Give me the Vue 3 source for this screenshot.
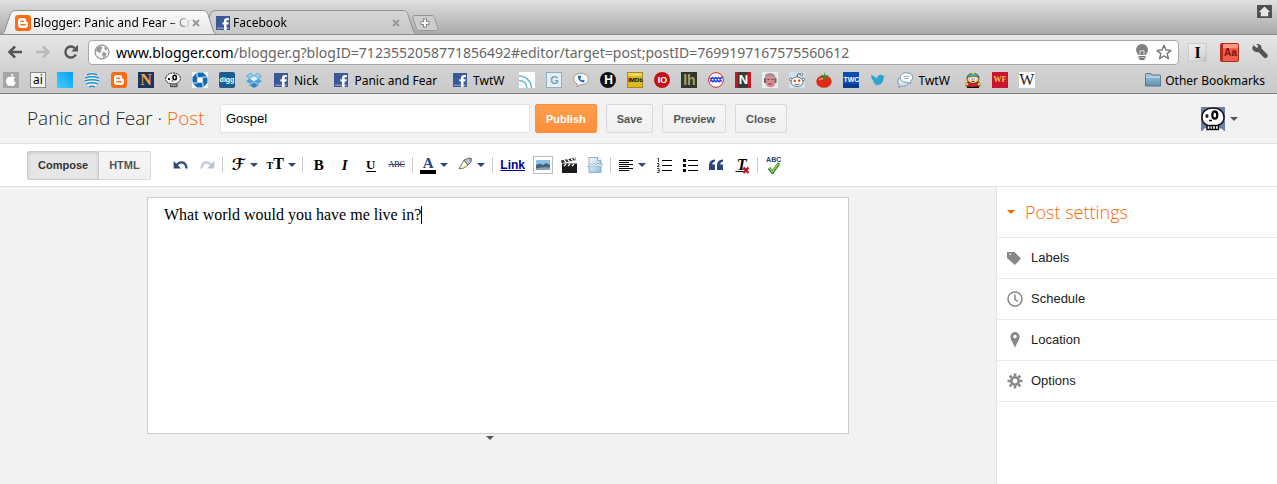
<script setup>
import { ref } from 'vue'

const tabs = [
    { title: 'Blogger: Panic and Fear – Cre', icon: 'blogger', active: true },
    { title: 'Facebook', icon: 'facebook', active: false }
]

// entries with "letters" have a text favicon, styled by class
const bookmarks = [
    { icon: 'apple', name: 'Apple' },
    { icon: 'ai', name: 'ai', letters: 'ai' },
    { icon: 'blue', name: 'Blue' },
    { icon: 'att', name: 'AT&T' },
    { icon: 'blogger', name: 'Blogger' },
    { icon: 'north', name: 'North', letters: 'N' },
    { icon: 'skull', name: 'Skull' },
    { icon: 'chase', name: 'Chase' },
    { icon: 'digg', name: 'Digg', letters: 'digg' },
    { icon: 'dropbox', name: 'Dropbox' },
    { icon: 'facebook', name: 'Nick', label: 'Nick' },
    { icon: 'facebook', name: 'Panic and Fear', label: 'Panic and Fear' },
    { icon: 'facebook', name: 'TwtW', label: 'TwtW' },
    { icon: 'feed', name: 'Feed' },
    { icon: 'gee', name: 'G', letters: 'G' },
    { icon: 'voice', name: 'Voice' },
    { icon: 'aitch', name: 'H', letters: 'H' },
    { icon: 'imdb', name: 'IMDb', letters: 'IMDb' },
    { icon: 'io', name: 'IO', letters: 'IO' },
    { icon: 'lh', name: 'Lifehacker', letters: 'lh' },
    { icon: 'wave', name: 'Wave' },
    { icon: 'netflix', name: 'Netflix', letters: 'N' },
    { icon: 'face', name: 'Face' },
    { icon: 'reddit', name: 'Reddit' },
    { icon: 'tomato', name: 'Tomatoes' },
    { icon: 'twc', name: 'TWC', letters: 'TWC' },
    { icon: 'bird', name: 'Twitter' },
    { icon: 'chat', name: 'TwtW chat', label: 'TwtW' },
    { icon: 'cartman', name: 'South Park' },
    { icon: 'wf', name: 'WF', letters: 'WF' },
    { icon: 'wiki', name: 'Wikipedia', letters: 'W' }
]

const toolGroups = [
    [{ icon: 'undo' }, { icon: 'redo' }],
    [{ icon: 'font', text: 'ℱ', menu: true }, { icon: 'size', text: 'T', menu: true }],
    [{ icon: 'bold', text: 'B' }, { icon: 'italic', text: 'I' }, { icon: 'underline', text: 'U' }, { icon: 'strike', text: 'ABC' }],
    [{ icon: 'color', text: 'A', menu: true }, { icon: 'highlight', menu: true }],
    [{ icon: 'link', text: 'Link' }, { icon: 'image' }, { icon: 'video' }, { icon: 'break' }],
    [{ icon: 'align', menu: true }, { icon: 'numbers' }, { icon: 'bullets' }, { icon: 'quote' }, { icon: 'clear', text: 'T', mark: 'cross' }],
    [{ icon: 'spell', text: 'ABC', mark: 'check' }]
]

const settings = [
    { icon: 'tag', label: 'Labels' },
    { icon: 'clock', label: 'Schedule' },
    { icon: 'pin', label: 'Location' },
    { icon: 'gear', label: 'Options' }
]

const title = ref('Gospel')
const body = ref('What world would you have me live in?')
const mode = ref('Compose')
</script>

<template>
    <div class="page">
        <svg class="sprite" aria-hidden="true">
            <defs>
                <linearGradient id="g-active" x1="0" y1="0" x2="0" y2="1">
                    <stop offset="0" stop-color="#fafafa" />
                    <stop offset="1" stop-color="#e6e6e6" />
                </linearGradient>
                <linearGradient id="g-idle" x1="0" y1="0" x2="0" y2="1">
                    <stop offset="0" stop-color="#d6d6d6" />
                    <stop offset="1" stop-color="#c6c6c6" />
                </linearGradient>
                <linearGradient id="g-blue" x1="0" y1="1" x2="1" y2="0">
                    <stop offset="0" stop-color="#3fd0ff" />
                    <stop offset="1" stop-color="#0a9cf5" />
                </linearGradient>
                <linearGradient id="g-folder" x1="0" y1="0" x2="0" y2="1">
                    <stop offset="0" stop-color="#a9c9de" />
                    <stop offset="1" stop-color="#5f8fb3" />
                </linearGradient>
                <linearGradient id="g-page" x1="0" y1="0" x2="1" y2="1">
                    <stop offset="0" stop-color="#fff" />
                    <stop offset="1" stop-color="#86b8e6" />
                </linearGradient>
            </defs>

            <symbol id="i-blogger" viewBox="0 0 16 16">
                <rect width="16" height="16" rx="3" fill="#ff6a13" />
                <path d="M6 3h2.500a2.700 2.700 0 0 1 2.700 2.700c0 .9.300 1.200 1 1.200.500 0 .8.300.8.800v2.300a3 3 0 0 1-3 3H6a3 3 0 0 1-3-3V6a3 3 0 0 1 3-3z" fill="#fff" />
                <path d="M6 6.200h2.300M6 9.800h4" stroke="#ff6a13" stroke-width="1.500" stroke-linecap="round" />
            </symbol>
            <symbol id="i-facebook" viewBox="0 0 16 16">
                <rect x="1" y="1" width="14" height="14" fill="#3b5998" />
                <path d="M2 12.500h12V14H2z" fill="#7e93c0" />
                <path d="M9 15V9.500H7.400V7.300H9V5.800C9 3.800 10.200 3 12 3h1.800v2.200h-1.200c-.7 0-1 .300-1 1v1.100h2.100l-.3 2.200h-1.800V15z" fill="#fff" />
            </symbol>
            <symbol id="i-apple" viewBox="0 0 16 16">
                <rect width="16" height="16" fill="#a6a6a6" />
                <path d="M8 5c1-.6 3-1 4.200.6-1.900 1.300-1.600 3.900.5 4.800C12 12.500 11 14 9.800 14c-.7 0-1-.4-1.800-.4s-1.200.4-1.900.4C4.300 13.800 3 11 3 8.600 3 5.500 6 4 8 5zM7.900 4.300C7.800 2.900 9 1.800 10.300 1.700 10.400 3.100 9.200 4.300 7.900 4.300z" fill="#fff" />
            </symbol>
            <symbol id="i-blue" viewBox="0 0 16 16">
                <rect width="16" height="16" fill="url(#g-blue)" />
            </symbol>
            <symbol id="i-att" viewBox="0 0 16 16">
                <circle cx="8" cy="8" r="7.500" fill="#e8f1f5" />
                <path d="M3 3q5-2.500 10 0M1 6q7-2.500 14 0M.7 9q7-2.500 14.600 0M2 12q6-2.500 12 0M5 14.700q3-1 6 0" fill="none" stroke="#2a8dbc" stroke-width="1.500" />
            </symbol>
            <symbol id="i-skull" viewBox="0 0 16 16">
                <path d="M8 1c4.500 0 7.300 2.300 7.300 5.500 0 2.500-1.500 3.700-3.300 4.700v3.500H5.500v-3.200C2.500 11 .7 9.500.7 6.800.7 3.400 3.800 1 8 1z" fill="#fff" stroke="#222" stroke-dasharray="2 .6" />
                <ellipse cx="9.700" cy="5.500" rx="1.700" ry="2.200" fill="none" stroke="#000" stroke-width="1.600" />
                <path d="M3 6h2v2H3z" fill="#111" />
                <path d="M6.500 9h2M7 12v3M9 12v3M11 12v3M5.500 11.800h6.500" fill="none" stroke="#222" stroke-width=".9" />
            </symbol>
            <symbol id="i-chase" viewBox="0 0 16 16">
                <rect width="16" height="16" fill="#fff" />
                <path d="M5 .5h6L15.500 5v6L11 15.500H5L.5 11V5z" fill="#0d6cb5" />
                <path d="M5.200 5.200h5.600v5.600H5.200z" fill="#fff" />
                <path d="M5 0v5M16 5h-5M11 16v-5M0 11h5" stroke="#fff" stroke-width=".9" />
            </symbol>
            <symbol id="i-dropbox" viewBox="0 0 16 16">
                <path d="M4.500.8 8 3.500l3.500-2.700L16 4l-3.200 2.700L16 9.200l-4.500 2.800L8 9.500 4.500 12 0 9.200l3.200-2.500L0 4z" fill="#4aa3df" />
                <path d="m8 4 4.300 2.700L8 9.300 3.700 6.700z" fill="#e4f3fc" />
                <path d="m3.200 12 1.300.9L8 10.400l3.500 2.500 1.300-.9v1L8 16l-4.800-3z" fill="#2f86c6" />
                <path d="m4.500 1.500 3 2.300L3.400 6 1 4zM11.500 1.500l-3 2.300L12.600 6 15 4z" fill="#8fcdf2" />
            </symbol>
            <symbol id="i-feed" viewBox="0 0 16 16">
                <rect width="16" height="16" fill="#fff" />
                <path d="M0 4c7 0 12 5 12.500 12M0 8.500c4.500 0 7.500 3 8 7.500" fill="none" stroke="#6bbcc6" stroke-width="1.500" />
                <path d="M0 12.500c2 0 3.500 1.500 3.700 3.500" fill="none" stroke="#c9e8ea" />
            </symbol>
            <symbol id="i-voice" viewBox="0 0 16 16">
                <path d="M8 1.300c4.300 0 7.300 2.300 7.300 5.700s-3 5.700-7.300 5.700l-1 0-3 2.300.3-3C2 11 .7 9.200.7 7c0-3.400 3-5.700 7.300-5.700z" fill="#f8f8f8" stroke="#999" />
                <path d="M5 4c-.3 4 2.500 6.500 6 6.300l.7-1.700-2-.8-.8.8C7.700 8 7.200 7 7.200 6l1-.6L7.300 3.500z" fill="#1c67b5" />
            </symbol>
            <symbol id="i-wave" viewBox="0 0 16 16">
                <circle cx="8" cy="8" r="7.400" fill="#fff" stroke="#e02626" />
                <path d="m1.500 6 1.500 1L4.500 5.500 6 7l1.500-1.500L9 7l1.500-1.500L12 7l1.500-1.500 1 .500M2 9.500 3.500 8.500 5 9.800l1.500-1.300L8 9.800l1.500-1.300L11 9.800l1.500-1.300 1.500 1" fill="none" stroke="#2338e0" stroke-width="1.500" />
            </symbol>
            <symbol id="i-face" viewBox="0 0 16 16">
                <rect width="16" height="16" fill="#e7ecec" />
                <path d="M3 5c0-5 10-5 10.500 0l-.5 8c-2 3-7 3-9 0z" fill="#d98c8c" />
                <path d="M3 4.500C4 .3 12 .3 13 4.500L8 3.700z" fill="#8b9a98" />
                <path d="M2 6h2v5H2zM12.500 6h2v5h-2z" fill="#56706b" />
                <path d="M5.500 7.500h2M9.500 7.500h2M6 12h4.500" stroke="#7a4040" />
            </symbol>
            <symbol id="i-reddit" viewBox="0 0 16 16">
                <rect width="16" height="16" fill="#cfe2f3" />
                <path d="m8 5 1-3.500 3 1" fill="none" stroke="#444" stroke-width=".8" />
                <g fill="#fff" stroke="#555" stroke-width=".8">
                    <circle cx="12.700" cy="2.500" r="1.200" />
                    <circle cx="2" cy="7.500" r="1.500" />
                    <circle cx="14" cy="7.500" r="1.500" />
                    <ellipse cx="8" cy="9.800" rx="6" ry="4.800" />
                </g>
                <circle cx="5.800" cy="8.700" r="1.200" fill="#f33d12" />
                <circle cx="10.200" cy="8.700" r="1.200" fill="#f33d12" />
                <path d="M5.500 12q2.500 1.500 5 0" fill="none" stroke="#333" stroke-width=".8" />
            </symbol>
            <symbol id="i-tomato" viewBox="0 0 16 16">
                <ellipse cx="8" cy="9.500" rx="7.700" ry="6.300" fill="#e02d1b" />
                <path d="M3 8q2-2 4-1" fill="none" stroke="#ff9c86" stroke-width="1.500" />
                <path d="M8.500 0 8 3.500 4.500 2.500 6.500 4.800 3.500 6l4-.3L9 8l.7-2.500 3 1-1.700-2.200 2-1.300-3.500.5z" fill="#3b8a2a" />
            </symbol>
            <symbol id="i-bird" viewBox="0 0 16 16">
                <path d="M1 3c2 .5 4 1.500 6 3.500C7.300 4 9 2.500 11 2.800c1 .1 1.500.5 2 1l2 .2-1.500 1.300c.8 5.200-4 9.200-9.500 7.700 1.500 0 2.500-.5 3-1-2 0-3.300-.7-4-2.300l1.500-.3C2.500 8.500 1.500 7 1.500 5.500z" fill="#2ea3cf" />
            </symbol>
            <symbol id="i-chat" viewBox="0 0 16 16">
                <path d="M5.500 5C2 5 .7 7.300.7 9.500c0 1.500.7 2.600 1.700 3.300L1.500 15.500 5 14c4 .5 6-1.500 6-4S9 5 5.500 5z" fill="#d6e6f1" stroke="#7695ab" />
                <path d="M9.500.8c3.500 0 6 1.900 6 4.700 0 1.800-.8 3-2.200 3.900l.4 2.600-3-1.800C6 10.700 3.500 8.500 3.500 5.500S6 .8 9.500.8z" fill="#fff" stroke="#7695ab" />
                <path d="M6.500 4.500h6M7 6.500h5" stroke="#9cb2c2" />
            </symbol>
            <symbol id="i-cartman" viewBox="0 0 16 16">
                <path d="M1 11q7-5 14 0v3q-7 3-14 0z" fill="#d5202a" stroke="#321" stroke-width=".8" />
                <ellipse cx="8" cy="6.500" rx="6" ry="5" fill="#f5c98b" stroke="#321" stroke-width=".7" />
                <path d="M2 5.500C3 0 13 0 14 5.500 11 3.700 5 3.700 2 5.500z" fill="#35bfc0" stroke="#333" stroke-width=".6" />
                <path d="M6.500.5h3v1.500h-3z" fill="#f3d327" />
                <ellipse cx="6.300" cy="6.800" rx="1.600" ry="1.500" fill="#fff" />
                <ellipse cx="9.700" cy="6.800" rx="1.600" ry="1.500" fill="#fff" />
                <path d="M6.500 6.500h1v1h-1zM8.700 6.500h1v1h-1zM6.800 9.300h2.400v.8H6.800zM2 15h12v1H2z" fill="#111" />
                <circle cx="1.800" cy="12" r="1.500" fill="#f3d327" />
                <circle cx="14.200" cy="12" r="1.500" fill="#f3d327" />
            </symbol>
            <symbol id="i-folder" viewBox="0 0 16 16">
                <path d="M.5 3.500V2.200c0-.5.300-.7.700-.7H6l1 1.500h8c.400 0 .600.200.600.600V14H.5z" fill="url(#g-folder)" stroke="#54798f" />
                <path d="M1 5h14" stroke="#cfe3f0" />
            </symbol>

            <symbol id="i-back" viewBox="0 0 16 16">
                <path d="M15 8H3M8 2.500 2.500 8 8 13.500" fill="none" stroke="currentColor" stroke-width="2.600" />
            </symbol>
            <symbol id="i-forward" viewBox="0 0 16 16">
                <path d="M1 8h12M8 2.500 13.500 8 8 13.500" fill="none" stroke="currentColor" stroke-width="2.600" />
            </symbol>
            <symbol id="i-reload" viewBox="0 0 16 16">
                <path d="M12.800 10.500A5.500 5.500 0 1 1 11.600 4" fill="none" stroke="currentColor" stroke-width="2.400" />
                <path d="M15 .8v6.700H8.300z" fill="currentColor" />
            </symbol>
            <symbol id="i-globe" viewBox="0 0 16 16">
                <circle cx="8" cy="8" r="7" fill="#f7f7f7" stroke="#777" />
                <path d="M3 3.500 7 2l1.500 2-2 2 1 1.500L5.500 9 3 7 1.700 8zM9 8l3.500 1-1 3.500L9.500 14 8 10.500zM10.500 2.300 13.500 5l-1.700 1.500-1.500-1.800z" fill="#999" />
            </symbol>
            <symbol id="i-bulb" viewBox="0 0 16 16">
                <path d="M8 0a5.800 5.800 0 0 1 6 5.800c0 2.200-1.500 3.200-2 5.200H4c-.5-2-2-3-2-5.200A5.800 5.800 0 0 1 8 0z" fill="#808080" />
                <path d="M6 11V6.500l1 .7 1-.7 1 .7 1-.7V11" fill="none" stroke="#ddd" />
                <path d="M4.500 12h7v2l-1.500 2H6l-1.500-2z" fill="#777" />
                <path d="M4.500 13.500h7" stroke="#bbb" />
            </symbol>
            <symbol id="i-star" viewBox="0 0 16 16">
                <path d="m8 1.300 2 4.700 5 .4-3.800 3.200 1.200 5L8 11.900l-4.400 2.700 1.200-5L1 6.400 6 6z" fill="#fff" stroke="#777" stroke-width="1.400" stroke-linejoin="round" />
            </symbol>
            <symbol id="i-wrench" viewBox="0 0 16 16">
                <path d="M1.500 1 4.300 3.700l1.500-.3L6 1.500 4 0c3-.6 6 1 5.500 4.600L15 10a2.300 2.300 0 0 1-3.200 3.400L6.500 8C3.500 9 .3 6.500.3 3.800z" fill="#555" />
            </symbol>
            <symbol id="i-home" viewBox="0 0 16 14">
                <rect width="16" height="14" fill="#4e4e4e" />
                <path d="m8 1.500 6 6h-2V12H4V7.500H2z" fill="#e6e6e6" />
            </symbol>

            <symbol id="i-undo" viewBox="0 0 16 16">
                <path d="M3.500 8.500C6.500 3.500 13 4.500 13.500 11.500" fill="none" stroke="#3a5383" stroke-width="2.400" />
                <path d="M.7 4v7.500H8z" fill="#2d4678" />
            </symbol>
            <symbol id="i-redo" viewBox="0 0 16 16">
                <path d="M12.500 8.500C9.500 3.500 3 4.500 2.500 11.500" fill="none" stroke="#c6ccd8" stroke-width="2.400" />
                <path d="M15.300 4v7.500H8z" fill="#bcc4d3" />
            </symbol>
            <symbol id="i-highlight" viewBox="0 0 16 16">
                <path d="m7 3 4 5-4 3-5 .8z" fill="#fff9c8" stroke="#555" stroke-width=".8" />
                <path d="m7 3 5-2 2.500.500-.5 3.500-3 3z" fill="#94a2bc" stroke="#555" stroke-width=".8" />
                <path d="m8.500 3 3.500 4M10 2l3 3.500" stroke="#e8ecf4" />
            </symbol>
            <symbol id="i-image" viewBox="0 0 20 18">
                <rect x=".5" y=".5" width="19" height="17" fill="#fff" stroke="#b4bfca" />
                <path d="M3 4h14v10H3z" fill="#8ec1ea" />
                <path d="m3 9 4-1.500L10 9l3-2 4 2v5H3z" fill="#496272" />
                <path d="M3 12.500q7-2 14-1V14H3z" fill="#8aa4b5" />
            </symbol>
            <symbol id="i-video" viewBox="0 0 16 16">
                <path d="M1 6.500h15V16H1z" fill="#1c1c1c" />
                <path d="m0 3.500 14.500-3 .6 2.500L.7 6z" fill="#222" />
                <path d="m3 3 2 2M6.500 2.300l2 2M10 1.500l2 2M13 1l1.500 1.500M3 9l2-2M7 9l2-2M11 9l2-2" stroke="#fff" stroke-width="1.300" />
            </symbol>
            <symbol id="i-break" viewBox="0 0 16 16">
                <path d="M2 .5h8.500l3.500 3V15.500H2z" fill="url(#g-page)" stroke="#8eabc8" />
                <path d="M10.500.5v3H14" fill="#fff" stroke="#8eabc8" />
                <path d="m1 8 2-1.500L5 8l2-1.500L9 8l2-1.500L13 8l2-1.500v2L13 10l-2-1.500L9 10 7 8.500 5 10 3 8.500 1 10z" fill="#fff" stroke="#7d90a5" stroke-width=".6" />
            </symbol>
            <symbol id="i-align" viewBox="0 0 16 16">
                <path d="M1 3.500h14M1 5.500h10M1 7.500h14M1 9.500h10M1 11.500h14M1 13.500h10" stroke="#000" />
            </symbol>
            <symbol id="i-numbers" viewBox="0 0 16 16">
                <path d="M6 3.500h10M6 8.500h10M6 13.500h10" stroke="#000" />
                <path d="M2.500 1v4M1.500 1.500h1M1 6.500h2v1.700L1 9.500h2.500M1 11.500h2.200v4H1M1.500 13.500h1.700" fill="none" stroke="#333" stroke-width=".9" />
            </symbol>
            <symbol id="i-bullets" viewBox="0 0 16 16">
                <path d="M6 3.500h10M6 8.500h10M6 13.500h10" stroke="#000" />
                <path d="M1 2h3v3H1zM1 7h3v3H1zM1 12h3v3H1z" />
            </symbol>
            <symbol id="i-quote" viewBox="0 0 16 16">
                <path d="M7 2.500v2C5 5 4.300 6 4.300 7.500H7V13H1V8.500C1 5 3 2.800 7 2.500zM15 2.500v2c-2 .5-2.700 1.500-2.700 3H15V13H9V8.500C9 5 11 2.800 15 2.500z" fill="#2d4678" />
            </symbol>
            <symbol id="i-cross" viewBox="0 0 16 16">
                <path d="M1.500 13.500h8" stroke="#000" />
                <path d="m9.500 9.500 5 5.500M14.500 9.500l-5 5.500" stroke="#c1121c" stroke-width="2.300" />
            </symbol>
            <symbol id="i-check" viewBox="0 0 16 16">
                <path d="m3 10 3.500 4.500L13 5" fill="none" stroke="#3a7a22" stroke-width="3" />
                <path d="m3.300 10.200 3.200 3.800 6-8.700" fill="none" stroke="#8ed65e" stroke-width="1.300" />
            </symbol>
            <symbol id="i-caret" viewBox="0 0 8 4">
                <path d="M0 0h8L4 4z" fill="currentColor" />
            </symbol>

            <symbol id="i-tag" viewBox="0 0 16 16">
                <path d="M0 2h7.500L14 8.500 8 15 0 8zM2.500 3.500v1.500H4V3.500z" fill="#888" fill-rule="evenodd" />
            </symbol>
            <symbol id="i-clock" viewBox="0 0 16 16">
                <circle cx="8" cy="8" r="7" fill="#fff" stroke="#888" stroke-width="1.500" />
                <path d="M8 3.500V8.500l3 2" fill="none" stroke="#888" stroke-width="1.500" />
            </symbol>
            <symbol id="i-pin" viewBox="0 0 16 16">
                <path d="M8 0a4.600 4.600 0 0 1 4.600 4.700C12.600 8 9.500 11 8 16 6.500 11 3.400 8 3.400 4.700A4.600 4.600 0 0 1 8 0zM8 2.800a1.800 1.800 0 1 0 0 3.600 1.800 1.800 0 0 0 0-3.600z" fill="#888" fill-rule="evenodd" />
            </symbol>
            <symbol id="i-gear" viewBox="0 0 16 16">
                <circle cx="8" cy="8" r="3.700" fill="none" stroke="#888" stroke-width="2.600" />
                <path d="M8 .5V3M8 13v2.500M.5 8H3M13 8h2.500M2.700 2.700l1.800 1.800M11.500 11.500l1.800 1.800M2.700 13.300l1.800-1.800M11.500 4.500l1.800-1.800" stroke="#888" stroke-width="2.600" />
            </symbol>
            <symbol id="i-avatar" viewBox="0 0 24 24">
                <rect width="24" height="24" fill="#6d80aa" />
                <path d="M1 24q3-4 7-3h9q4 0 6 3z" fill="#fff" />
                <path d="M12 1c7 0 11 4 11 9.500 0 4-2 6.500-5.500 7.500v4.500H6V18C3 17 1 14 1 10 1 4.500 5.500 1 12 1z" fill="#fff" stroke="#111" stroke-width="1.500" />
                <ellipse cx="13.800" cy="8" rx="2.500" ry="3.600" fill="#fff" stroke="#000" stroke-width="2.200" />
                <ellipse cx="6" cy="9" rx="1.600" ry="2" fill="#222" />
                <path d="M8 13.500h3M6 18.500h12M9 18.500v4M11.500 18.500v4M14.500 18.500v4" stroke="#111" stroke-width="1.300" />
            </symbol>
        </svg>

        <div class="tabstrip">
            <div v-for="tab in tabs" :key="tab.title" class="tab" :class="{ active: tab.active }">
                <svg class="tab-shape" viewBox="0 0 218 25">
                    <path d="M0 25C3 24 4 23 5 20L10 5C11 2 13 .5 16 .5H202c4 0 5 1.500 6 4L213 20c1 3 2 4 5 5z" :fill="tab.active ? 'url(#g-active)' : 'url(#g-idle)'" />
                    <path d="M0 24.500C3 24 4 23 5 20L10 5C11 2 13 .5 16 .5H202c4 0 5 1.500 6 4L213 20c1 3 2 4 5 4.500" fill="none" stroke="#909090" />
                </svg>
                <svg class="icon"><use :href="'#i-' + tab.icon" /></svg>
                <span class="tab-title">{{ tab.title }}</span>
                <button class="tab-close" aria-label="Close tab">
                    <svg viewBox="0 0 8 8"><path d="m1 1 6 6M7 1 1 7" stroke="#999" stroke-width="2" /></svg>
                </button>
            </div>
            <button class="new-tab" aria-label="New tab">
                <svg viewBox="0 0 26 16">
                    <path d="M3 .5h16c2 0 3 .8 3.500 2l3 10c.5 2-.3 3-2 3H8c-2 0-3-.8-3.500-2L1 3.500C.5 1.500 1 .5 3 .5z" fill="#cdcdcd" stroke="#979797" />
                    <path d="M13 3.500v9M8.500 8h9" stroke="#888" stroke-width="4" />
                    <path d="M13 4.500v7M9.500 8h7" stroke="#fff" stroke-width="2" />
                </svg>
            </button>
            <svg class="home"><use href="#i-home" /></svg>
        </div>

        <div class="navbar">
            <button class="nav-btn" aria-label="Back"><svg class="icon"><use href="#i-back" /></svg></button>
            <button class="nav-btn off" aria-label="Forward"><svg class="icon"><use href="#i-forward" /></svg></button>
            <button class="nav-btn" aria-label="Reload"><svg class="icon"><use href="#i-reload" /></svg></button>
            <div class="omnibox">
                <svg class="icon"><use href="#i-globe" /></svg>
                <span class="url"><b>www.blogger.com</b>/blogger.g?blogID=7123552058771856492#editor/target=post;postID=7699197167575560612</span>
                <svg class="icon"><use href="#i-bulb" /></svg>
                <svg class="icon"><use href="#i-star" /></svg>
            </div>
            <div class="extensions">
                <button class="ext reader" aria-label="Read later">I</button>
                <button class="ext dictionary" aria-label="Dictionary">Aa</button>
                <button aria-label="Settings"><svg class="icon"><use href="#i-wrench" /></svg></button>
            </div>
        </div>

        <nav class="bookmarks">
            <a v-for="item in bookmarks" :key="item.name" href="#" :aria-label="item.name" :class="{ labelled: item.label }">
                <span v-if="item.letters" class="icon letters" :class="item.icon">{{ item.letters }}</span>
                <svg v-else class="icon"><use :href="'#i-' + item.icon" /></svg>
                <span v-if="item.label">{{ item.label }}</span>
            </a>
            <a href="#" class="other">
                <svg class="icon"><use href="#i-folder" /></svg>
                <span>Other Bookmarks</span>
            </a>
        </nav>

        <header class="header">
            <h1>Panic and Fear · <span class="accent">Post</span></h1>
            <input v-model="title" class="title-input" type="text" aria-label="Post title">
            <div class="actions">
                <button class="btn primary">Publish</button>
                <button class="btn">Save</button>
                <button class="btn">Preview</button>
                <button class="btn">Close</button>
            </div>
            <button class="account" aria-label="Account">
                <svg class="avatar"><use href="#i-avatar" /></svg>
                <svg class="caret"><use href="#i-caret" /></svg>
            </button>
        </header>

        <div class="toolbar">
            <div class="modes">
                <button :class="{ on: mode === 'Compose' }" @click="mode = 'Compose'">Compose</button>
                <button :class="{ on: mode === 'HTML' }" @click="mode = 'HTML'">HTML</button>
            </div>
            <div v-for="(group, i) in toolGroups" :key="i" class="group">
                <button v-for="tool in group" :key="tool.icon" class="tool" :class="[tool.icon, { menu: tool.menu }]" :aria-label="tool.icon">
                    <span v-if="tool.text" class="sign"><small v-if="tool.icon === 'size'">T</small>{{ tool.text }}</span>
                    <svg v-else class="glyph"><use :href="'#i-' + tool.icon" /></svg>
                    <svg v-if="tool.mark" class="glyph mark"><use :href="'#i-' + tool.mark" /></svg>
                    <svg v-if="tool.menu" class="caret"><use href="#i-caret" /></svg>
                </button>
            </div>
        </div>

        <main class="main">
            <section class="editor">
                <div class="paper">
                    <textarea v-model="body" aria-label="Post body" spellcheck="false"></textarea>
                    <i class="cursor"></i>
                </div>
                <svg class="caret"><use href="#i-caret" /></svg>
            </section>
            <aside class="sidebar">
                <h2>
                    <svg class="caret"><use href="#i-caret" /></svg>
                    Post settings
                </h2>
                <ul>
                    <li v-for="item in settings" :key="item.label">
                        <a href="#">
                            <svg class="icon"><use :href="'#i-' + item.icon" /></svg>
                            <span>{{ item.label }}</span>
                        </a>
                    </li>
                </ul>
            </aside>
        </main>
    </div>
</template>

<style>
body {
    background: #f2f2f2;
}
</style>

<style scoped>
.page {
    display: flex;
    flex-direction: column;
    min-height: 100vh;
    font-family: "Liberation Sans", Arial, sans-serif;
    font-size: 13px;
    color: #222;
}

.page * {
    box-sizing: border-box;
}

.sprite {
    position: absolute;
    width: 0;
    height: 0;
}

svg {
    display: block;
    flex: none;
}

button {
    padding: 0;
    border: 0;
    background: none;
    font: inherit;
    color: inherit;
}

a {
    color: inherit;
    text-decoration: none;
}

.icon {
    width: 16px;
    height: 16px;
}

.caret {
    width: 8px;
    height: 4px;
}

/* browser chrome */
.tabstrip,
.navbar,
.bookmarks {
    font-family: "Noto Sans", sans-serif;
    font-size: 12px;
    color: #000;
}

.tabstrip {
    display: flex;
    align-items: flex-end;
    height: 35px;
    padding-right: 5px;
    background: linear-gradient(#e0e0e0, #a9a9a9);
    border-bottom: 1px solid #8c8c8c;
    overflow: hidden;
}

.tab {
    position: relative;
    display: flex;
    align-items: center;
    width: 218px;
    height: 25px;
    padding: 0 18px 0 15px;
    margin: 0 -18px -1px 0;
}

.tab.active {
    z-index: 1;
}

.tab-shape {
    position: absolute;
    left: 0;
    top: 0;
    width: 218px;
    height: 25px;
}

.tab .icon,
.tab-title,
.tab-close {
    position: relative;
}

.tab-title {
    flex: 1;
    min-width: 0;
    margin-left: 2px;
    white-space: nowrap;
    mask-image: linear-gradient(to right, #000 132px, transparent 160px);
}

.tab-close svg {
    width: 8px;
    height: 8px;
}

.new-tab {
    margin: 0 auto 3px 12px;
}

.new-tab svg {
    width: 26px;
    height: 16px;
}

.home {
    width: 15px;
    height: 13px;
    align-self: flex-start;
    margin-top: 5px;
}

.navbar {
    display: flex;
    align-items: center;
    height: 34px;
    padding: 0 9px 0 7px;
    background: linear-gradient(#e6e6e6, #d2d2d2);
}

.nav-btn {
    width: 28px;
    color: #555;
}

.nav-btn.off {
    color: #bbb;
}

.omnibox {
    display: flex;
    align-items: center;
    gap: 6px;
    flex: 1;
    height: 25px;
    padding: 0 6px 0 5px;
    margin: 0 9px 0 -3px;
    background: #fff;
    border: 1px solid #a8a8a8;
    border-radius: 4px;
}

.url {
    flex: 1;
    font-size: 14px;
    color: #666;
    white-space: nowrap;
}

.url b {
    font-weight: normal;
    color: #000;
}

.extensions {
    display: flex;
    align-items: center;
    gap: 13px;
}

.ext {
    width: 19px;
    height: 19px;
    line-height: 18px;
    text-align: center;
}

.reader {
    border: 1px solid #ccc;
    background: linear-gradient(135deg, #f2f2f2, #d8d8d8 75%, #b8b8b8);
    font: bold 16px/17px "Liberation Serif", serif;
}

.dictionary {
    border: 1px solid #b5281b;
    border-left-width: 3px;
    border-radius: 2px;
    background: linear-gradient(#ff9885 4px, #f0604c 4px);
    font: bold 10px/18px "Liberation Sans", sans-serif;
    color: #7d0f0a;
}

.bookmarks {
    display: flex;
    align-items: center;
    gap: 11px;
    height: 25px;
    padding: 0 12px 2px 3px;
    background: linear-gradient(#d2d2d2, #c9c9c9);
    border-bottom: 1px solid #7c7c7c;
    white-space: nowrap;
}

.bookmarks a {
    display: flex;
    align-items: center;
    gap: 5px;
}

.bookmarks .labelled {
    margin-right: 4px;
}

.bookmarks .other {
    margin-left: auto;
    gap: 4px;
}

.letters {
    display: flex;
    align-items: center;
    justify-content: center;
    font: bold 12px/16px "Liberation Sans", sans-serif;
}

.ai {
    border: 1px solid #888;
    background: #f4f4f4;
    font: 12px/14px "Noto Sans", sans-serif;
}

.north {
    background: #1b355e;
    font: bold 16px/16px "Liberation Serif", serif;
    color: #f0a53a;
}

.digg {
    border-radius: 2px;
    background: #1b5d8e;
    font-size: 7px;
    color: #fff;
}

.gee {
    border: 1px solid #8db0c8;
    background: #e3eef5;
    font-size: 11px;
    color: #7fa0b5;
}

.aitch {
    border-radius: 50%;
    background: #111;
    color: #fff;
}

.imdb {
    border: 1px solid #a68a1b;
    background: linear-gradient(#efd65b 3px, #ddb91f 3px);
    font-size: 6px;
}

.io {
    border-radius: 50%;
    background: #c4121a;
    font-size: 9px;
    color: #fff;
}

.lh {
    background: #33362a;
    font-size: 14px;
    color: #a9a46a;
}

.netflix {
    border: solid #c9161d;
    border-width: 0 3px;
    background: #3a3a3a;
    font-size: 13px;
    color: #fff;
}

.twc {
    background: linear-gradient(#0a4db3 12px, #083b8c 12px);
    font-size: 7px;
    color: #fff;
}

.wf {
    background: #cc1432;
    font: bold 8px/16px "Liberation Serif", serif;
    color: #f7c93c;
}

.wiki {
    background: #fff;
    font: 16px/16px "Liberation Serif", serif;
    color: #222;
}

/* blogger header */
.header {
    display: flex;
    align-items: center;
    height: 50px;
    padding: 0 39px 0 27px;
    background: #f2f2f2;
    border-bottom: 1px solid #e3e3e3;
}

h1,
h2 {
    margin: 0;
    font-family: "Open Sans", sans-serif;
    font-size: 18px;
    font-weight: 300;
}

h1 {
    width: 193px;
    padding-bottom: 2px;
    font-size: 19px;
    line-height: 24px;
    white-space: nowrap;
}

.accent {
    color: #f60;
}

.title-input {
    width: 310px;
    height: 29px;
    padding: 0 5px;
    border: 1px solid #e3e3e3;
    border-radius: 2px;
    background: #fff;
    font: 13px "Liberation Sans", Arial, sans-serif;
    color: #000;
}

.actions {
    display: flex;
    gap: 9px;
    margin-left: 5px;
}

.btn {
    height: 29px;
    padding: 0 10px;
    border: 1px solid #d9d9d9;
    border-radius: 2px;
    background: linear-gradient(#f6f6f6, #f0f0f0);
    font-size: 11px;
    font-weight: bold;
    color: #555;
}

.btn.primary {
    border-color: #ff8f3c;
    background: linear-gradient(#ff9f4e, #ff8d3b);
    color: #fff;
}

.account {
    display: flex;
    align-items: center;
    gap: 5px;
    margin-left: auto;
    color: #555;
}

.avatar {
    width: 24px;
    height: 24px;
}

/* editor toolbar */
.toolbar {
    display: flex;
    align-items: center;
    height: 43px;
    padding: 0 27px;
    background: #fff;
    border-bottom: 1px solid #e3e3e3;
}

.modes {
    display: flex;
    margin-right: 17px;
}

.modes button {
    height: 29px;
    padding: 0 10px;
    border: 1px solid #d9d9d9;
    border-radius: 0 2px 2px 0;
    background: linear-gradient(#f6f6f6, #f0f0f0);
    font-size: 11px;
    font-weight: bold;
    color: #555;
}

.modes button + button {
    border-left: 0;
}

.modes .on {
    border-color: #ccc;
    border-radius: 2px 0 0 2px;
    background: #e6e6e6;
    box-shadow: inset 0 1px 3px rgba(0, 0, 0, 0.15);
    color: #333;
}

.group {
    display: flex;
    align-items: center;
}

.group + .group::before {
    content: "";
    width: 1px;
    height: 16px;
    margin: 0 3px 0 2px;
    background: #ccc;
}

.tool {
    position: relative;
    display: flex;
    align-items: center;
    justify-content: center;
    width: 26px;
    height: 26px;
}

.tool.menu {
    gap: 4px;
    width: 37px;
    color: #2d4678;
}

.sign {
    min-width: 16px;
    font: bold 15px/18px "Liberation Serif", serif;
    text-align: center;
    color: #000;
}

.font .sign {
    font: bold 16px/18px "DejaVu Sans", sans-serif;
}

.size .sign {
    font-size: 16px;
}

.size small {
    font-size: 10px;
}

.italic .sign {
    font-style: italic;
}

.underline .sign {
    border-bottom: 1px solid #000;
    min-width: 10px;
    font-size: 13px;
    line-height: 13px;
}

.strike .sign {
    font-size: 8px;
    font-weight: normal;
    text-decoration: line-through #2d4678;
}

.color .sign {
    border-bottom: 4px solid #000;
    line-height: 14px;
    color: #2d4678;
}

.clear .sign {
    font-size: 16px;
    font-style: italic;
}

.spell .sign {
    padding-bottom: 10px;
    font: bold 7px/8px "Liberation Sans", sans-serif;
    color: #24406f;
}

.tool.link {
    width: 34px;
}

.link .sign {
    font: bold 12px/16px "Liberation Sans", sans-serif;
    text-decoration: underline;
    color: #000090;
}

.glyph {
    width: 16px;
    height: 16px;
}

.mark {
    position: absolute;
    left: 5px;
    top: 6px;
}

.image .glyph {
    width: 20px;
    height: 18px;
}

/* post body and settings */
.main {
    display: flex;
    flex: 1;
}

.editor {
    display: flex;
    flex: 1;
    flex-direction: column;
    align-items: center;
    padding: 10px 20px;
    color: #555;
}

.paper {
    position: relative;
    width: 100%;
    max-width: 702px;
    margin-bottom: 2px;
    border: 1px solid #ccc;
    background: #fff;
}

.editor > .caret {
    margin-right: 17px;
}

textarea {
    display: block;
    width: 100%;
    height: 235px;
    padding: 8px 16px;
    border: 0;
    outline: 0;
    background: none;
    resize: none;
    font: 16px/18px "Liberation Serif", "Times New Roman", serif;
    color: #000;
}

.cursor {
    position: absolute;
    left: 273px;
    top: 8px;
    width: 1px;
    height: 18px;
    background: #000;
}

.sidebar {
    width: 281px;
    border-left: 1px solid #e3e3e3;
    background: #fff;
}

.sidebar h2 {
    display: flex;
    align-items: center;
    gap: 10px;
    height: 51px;
    padding: 0 10px;
    border-bottom: 1px solid #ebebeb;
    color: #f60;
}

.sidebar ul {
    margin: 0;
    padding: 0;
    list-style: none;
}

.sidebar li a {
    display: flex;
    align-items: center;
    gap: 8px;
    height: 41px;
    padding: 0 10px;
    border-bottom: 1px solid #ebebeb;
}

.sidebar li span {
    padding-bottom: 2px;
}
</style>
